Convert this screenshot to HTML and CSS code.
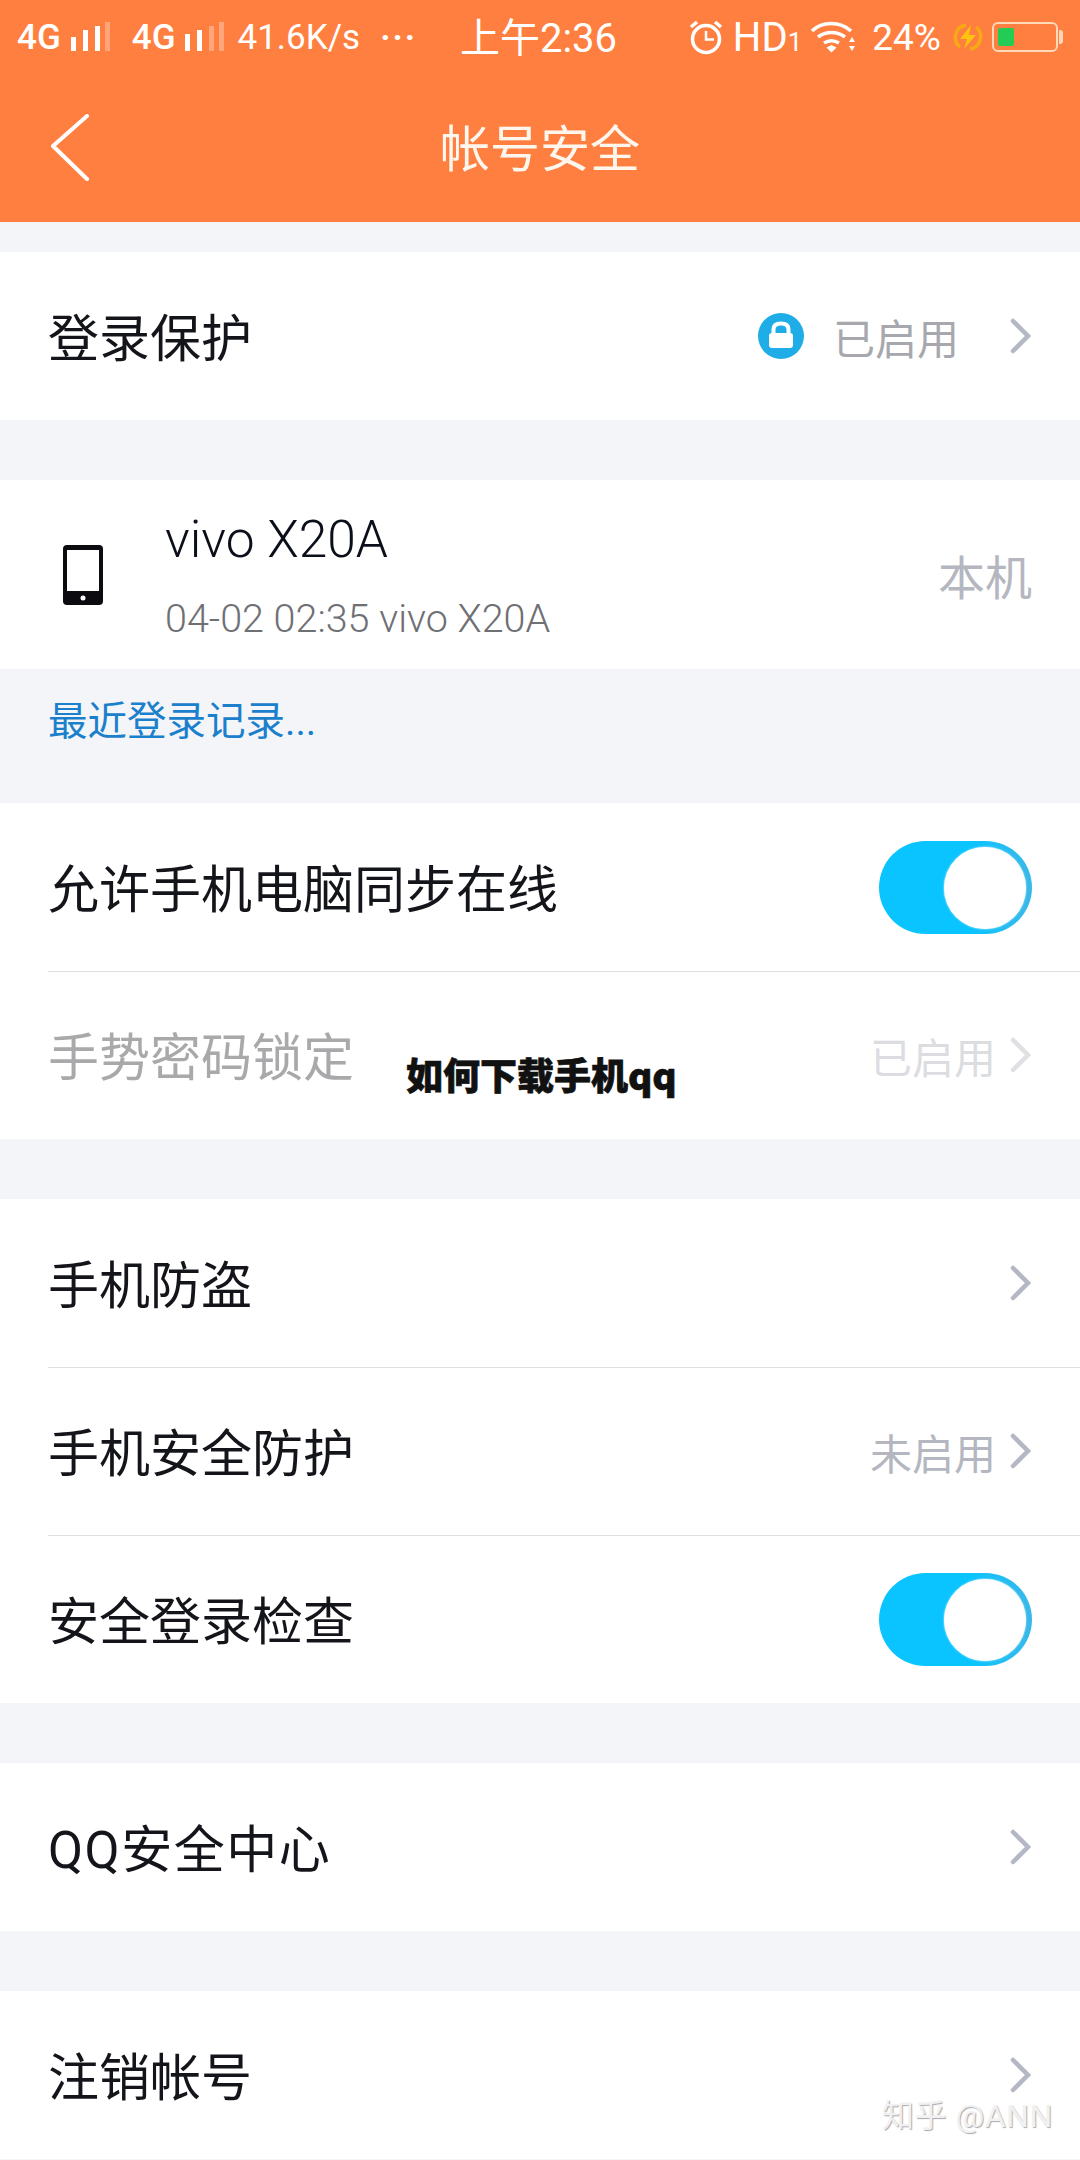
FILE: index.html
```html
<!DOCTYPE html>
<html lang="zh-CN">
<head>
    <meta charset="UTF-8">
    <meta name="viewport" content="width=device-width, initial-scale=1.0">
    <title>帐号安全</title>
    <link rel="stylesheet" href="styles.css">
</head>
<body>
    <div class="phone">
        <header class="top">
            <div class="status">
                <div class="status-group">
                    <span class="net">4G</span>
                    <svg class="signal" width="42" height="34" viewBox="0 0 42 34"><g fill="#fff"><rect x="1" y="17" width="5" height="14"/><rect x="13" y="10" width="5" height="21"/><rect x="25" y="6" width="5" height="25"/></g><rect x="35" y="2" width="5" height="29" fill="#fff" opacity=".3"/></svg>
                    <span class="net net-second">4G</span>
                    <svg class="signal" width="42" height="34" viewBox="0 0 42 34"><g fill="#fff"><rect x="1" y="14" width="5" height="17"/><rect x="13" y="10" width="5" height="21"/></g><g fill="#fff" opacity=".3"><rect x="25" y="6" width="5" height="25"/><rect x="35" y="2" width="5" height="29"/></g></svg>
                    <span class="speed">41.6K/s</span>
                    <span class="dots">···</span>
                </div>
                <div class="clock">上午2:36</div>
                <div class="status-group">
                    <svg width="34" height="36" viewBox="0 0 34 36"><g fill="none" stroke="#fff"><circle cx="17" cy="20" r="13.5" stroke-width="3.5"/><path d="M17 12v8.500h8" stroke-width="2.500"/><path d="M2 8l6-5M32 8l-6-5" stroke-width="3.500"/></g></svg>
                    <span class="hd">HD<small>1</small></span>
                    <svg class="wifi" width="46" height="34" viewBox="0 0 46 34"><g fill="none" stroke="#fff" stroke-width="3.500"><path d="M1 11C11 1 29 1 40 11"/><path d="M7 17c8-6 19-6 27 0"/><path d="M13 23c5-3 10-3 15 0"/></g><path d="M15.500 27.500l5-2.500 5 2.500-5 5zM38 22l3-5 3 5zM38 26h6l-3 5z" fill="#fff"/></svg>
                    <span class="percent">24%</span>
                    <svg class="bolt" width="30" height="32" viewBox="0 0 30 32"><path d="M7 26A12.500 12.500 0 0 1 13 4M23 6a12.500 12.500 0 0 1-6 22" fill="none" stroke="#f7a914" stroke-width="3.500"/><path d="M18 4L7 18h7l-3 10 12-14h-7z" fill="#ffc20e"/></svg>
                    <div class="battery"><div class="battery-level"></div></div>
                </div>
            </div>
            <div class="title-bar">
                <svg class="back" width="40" height="68" viewBox="0 0 40 68"><path d="M37 2L3 32l34 33" fill="none" stroke="#fff" stroke-width="4" stroke-linecap="round" stroke-linejoin="round"/></svg>
                <h1>帐号安全</h1>
            </div>
        </header>

        <section class="group group-first">
            <div class="row">
                <span class="label">登录保护</span>
                <div class="side">
                    <svg class="lock" width="46" height="46" viewBox="0 0 46 46"><circle cx="23" cy="23" r="23" fill="#1fade8"/><rect x="11" y="20" width="24" height="15" rx="3" fill="#fff"/><path d="M15.500 21v-4.500q0-6 7.500-6t7.500 6V21" fill="none" stroke="#fff" stroke-width="4"/></svg>
                    <span class="value value-lock">已启用</span>
                    <svg class="chevron chevron-far" width="22" height="36" viewBox="0 0 22 36"><path d="M3 3l15 15L3 33" fill="none" stroke="#b4b7c4" stroke-width="4.500" stroke-linecap="round"/></svg>
                </div>
            </div>
        </section>

        <section class="group device-group">
            <div class="row device">
                <div class="device-main">
                    <svg class="device-icon" width="40" height="60" viewBox="0 0 40 60"><rect x="0" y="0" width="40" height="60" rx="4" fill="#0c0c10"/><rect x="4" y="5" width="32" height="41" fill="#fff"/><circle cx="20" cy="53" r="2.500" fill="#fff"/></svg>
                    <div class="device-text">
                        <div class="device-name">vivo X20A</div>
                        <div class="device-last">04-02 02:35 vivo X20A</div>
                    </div>
                </div>
                <span class="this-phone">本机</span>
            </div>
        </section>
        <div class="recent">最近登录记录...</div>

        <section class="group">
            <div class="row">
                <span class="label">允许手机电脑同步在线</span>
                <div class="switch"><div class="knob"></div></div>
            </div>
            <div class="row row-line row-off">
                <span class="label">手势密码锁定</span>
                <div class="side">
                    <span class="value">已启用</span>
                    <svg class="chevron" width="22" height="36" viewBox="0 0 22 36"><path d="M3 3l15 15L3 33" fill="none" stroke="#dfe0e4" stroke-width="4.500" stroke-linecap="round"/></svg>
                </div>
            </div>
        </section>

        <section class="group">
            <div class="row">
                <span class="label">手机防盗</span>
                <div class="side">
                    <svg class="chevron" width="22" height="36" viewBox="0 0 22 36"><path d="M3 3l15 15L3 33" fill="none" stroke="#b4b7c4" stroke-width="4.500" stroke-linecap="round"/></svg>
                </div>
            </div>
            <div class="row row-line">
                <span class="label">手机安全防护</span>
                <div class="side">
                    <span class="value value-pale">未启用</span>
                    <svg class="chevron" width="22" height="36" viewBox="0 0 22 36"><path d="M3 3l15 15L3 33" fill="none" stroke="#b4b7c4" stroke-width="4.500" stroke-linecap="round"/></svg>
                </div>
            </div>
            <div class="row row-line">
                <span class="label">安全登录检查</span>
                <div class="switch"><div class="knob"></div></div>
            </div>
        </section>

        <section class="group">
            <div class="row">
                <span class="label label-latin">QQ安全中心</span>
                <div class="side">
                    <svg class="chevron" width="22" height="36" viewBox="0 0 22 36"><path d="M3 3l15 15L3 33" fill="none" stroke="#b4b7c4" stroke-width="4.500" stroke-linecap="round"/></svg>
                </div>
            </div>
        </section>

        <section class="group group-last">
            <div class="row">
                <span class="label">注销帐号</span>
                <div class="side">
                    <svg class="chevron" width="22" height="36" viewBox="0 0 22 36"><path d="M3 3l15 15L3 33" fill="none" stroke="#b4b7c4" stroke-width="4.500" stroke-linecap="round"/></svg>
                </div>
            </div>
        </section>

        <div class="caption">如何下载手机qq</div>
        <div class="credit">知乎 @ANN</div>
    </div>
</body>
</html>
```

FILE: styles.css
```css
* {
    box-sizing: border-box;
}
body {
    margin: 0;
    font-family: Roboto, "Noto Sans CJK SC", sans-serif;
    background-color: #f3f5f8;
    color: #14151a;
}
.phone {
    position: relative;
    width: 1080px;
    height: 2160px;
    overflow: hidden;
}
.top {
    height: 222px;
    background-color: #ff7f40;
    color: #fff;
}
.status {
    display: flex;
    justify-content: space-between;
    align-items: center;
    height: 74px;
    padding: 0 22px 0 17px;
}
.status-group {
    display: flex;
    align-items: center;
}
.net {
    font-size: 35px;
    font-weight: 500;
}
.net-second {
    margin-left: 20px;
}
.signal {
    margin-left: 9px;
}
.speed {
    margin-left: 11px;
    font-size: 35px;
}
.dots {
    margin-left: 20px;
    width: 34px;
    font-size: 34px;
    font-weight: 700;
    line-height: 1;
    letter-spacing: 2px;
}
.clock {
    margin-right: 26px;
    margin-bottom: 4px;
    font-size: 40px;
}
.hd {
    margin-left: 10px;
    font-size: 40px;
}
.hd small {
    font-size: 26px;
}
.wifi {
    margin-left: 9px;
}
.percent {
    margin-left: 15px;
    font-size: 37px;
}
.bolt {
    margin-left: 12px;
}
.battery {
    position: relative;
    width: 66px;
    height: 30px;
    margin-left: 9px;
    padding: 4px;
    border: 2px solid #ffd9b8;
    border-radius: 6px;
}
.battery::after {
    content: "";
    position: absolute;
    right: -7px;
    top: 6px;
    width: 4px;
    height: 14px;
    border-radius: 0 3px 3px 0;
    background-color: #ffd9b8;
}
.battery-level {
    width: 16px;
    height: 100%;
    border-radius: 2px;
    background-color: #22cc55;
}
.title-bar {
    position: relative;
    display: flex;
    justify-content: center;
    align-items: center;
    height: 148px;
    padding-bottom: 6px;
}
.title-bar h1 {
    margin: 0;
    font-size: 50px;
    font-weight: 400;
    color: #fff6ee;
}
.back {
    position: absolute;
    left: 50px;
    top: 40px;
}
.group {
    margin-top: 60px;
    background-color: #fff;
}
.group-first {
    margin-top: 30px;
}
.device-group {
    margin-top: 60px;
}
.row {
    display: flex;
    justify-content: space-between;
    align-items: center;
    height: 168px;
    padding: 0 48px 0 48px;
}
.row-line {
    position: relative;
}
.row-line::before {
    content: "";
    position: absolute;
    left: 48px;
    right: 0;
    top: 0;
    height: 1px;
    background-color: #dfdfe3;
}
.label {
    margin-top: -2px;
    font-size: 51px;
}
.label-latin {
    letter-spacing: 1.5px;
}
.side {
    display: flex;
    align-items: center;
}
.value {
    font-size: 42px;
    color: #dcdde1;
}
.value-lock {
    margin-left: 29px;
    color: #a6a8ae;
}
.value-pale {
    color: #b4b6c0;
}
.chevron {
    flex: none;
    margin-left: 14px;
}
.chevron-far {
    margin-left: 51px;
}
.row-off .label {
    color: #a9a9ab;
}
.device {
    height: 189px;
}
.device-main {
    display: flex;
    align-items: center;
}
.device-icon {
    margin-left: 15px;
    margin-right: 62px;
}
.device-text {
    padding-top: 2px;
}
.device-name {
    font-size: 51.5px;
    font-weight: 300;
    line-height: 60px;
    color: #0b0f1a;
}
.device-last {
    margin-top: 26px;
    font-size: 39.5px;
    font-weight: 300;
    line-height: 46px;
    color: #6f7074;
}
.this-phone {
    font-size: 47px;
    color: #b4b6c0;
}
.recent {
    height: 74px;
    padding: 30px 0 0 48px;
    font-size: 39.5px;
    line-height: 46px;
    color: #1b80cc;
}
.recent + .group {
    margin-top: 60px;
}
.switch {
    position: relative;
    width: 153px;
    height: 93px;
    border-radius: 47px;
    background: linear-gradient(90deg, #0ac4ff 60%, #3ab8e8);
}
.knob {
    position: absolute;
    right: 6px;
    top: 6px;
    width: 82px;
    height: 82px;
    border-radius: 50%;
    background-color: #fff;
    box-shadow: 0 0 2px #fff;
}
.caption {
    position: absolute;
    left: 406px;
    top: 1049px;
    font-family: "Noto Sans CJK SC", sans-serif;
    font-size: 37px;
    font-weight: 900;
    line-height: 50px;
    color: #111;
    white-space: nowrap;
    -webkit-text-stroke: 0.7px #111;
}
.credit {
    position: absolute;
    left: 882px;
    top: 2096px;
    font-size: 32px;
    line-height: 40px;
    letter-spacing: 0.5px;
    color: #f1f1f3;
    text-shadow: 1px 1px 1px #a9a9ad;
    white-space: nowrap;
}
```
